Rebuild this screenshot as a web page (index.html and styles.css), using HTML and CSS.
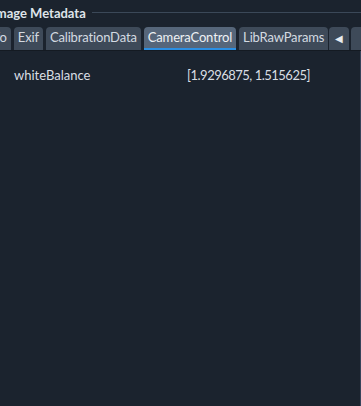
FILE: index.html
```html
<!DOCTYPE html>
<html lang="en">
<head>
  <meta charset="UTF-8">
  <title>Image Metadata</title>
  <link rel="stylesheet" href="styles.css">
</head>

<body>
  <div class="panel">
    <!-- Group title -->
    <div class="group-title">
      <span class="title-text">Image Metadata</span>
      <span class="title-line"></span>
    </div>

    <!-- Tab bar (scrolled) -->
    <div class="tab-bar">
      <div class="tabs">
        <div class="tab first">Info</div>
        <div class="tab">Exif</div>
        <div class="tab">CalibrationData</div>
        <div class="tab active">CameraControl</div>
        <div class="tab">LibRawParams</div>
      </div>
      <div class="scroll-btns">
        <div class="scroll-btn">&#9664;</div>
        <div class="scroll-btn"></div>
      </div>
    </div>

    <!-- Tab page -->
    <div class="page">
      <div class="row">
        <span class="key">whiteBalance</span>
        <span class="value">[1.9296875, 1.515625]</span>
      </div>
    </div>
  </div>
</body>
</html>
```

FILE: styles.css
```css
body {
  margin: 0;
  background: #1b232e;
  font-family: Lato, "Noto Sans", sans-serif;
  font-size: 13px;
  font-variant-ligatures: none;
  color: #d9dee4;
  overflow: hidden;
}

.panel {
  width: 361px;
  height: 406px;
  display: flex;
  flex-direction: column;
  overflow: hidden;
}

.group-title {
  display: flex;
  align-items: center;
  height: 25px;
  margin-left: -8px;
  padding-bottom: 2px;
}

.title-text {
  font-weight: bold;
  white-space: nowrap;
  color: #dfe4ea;
}

.title-line {
  flex: 1;
  height: 1px;
  background: #3b4858;
  margin-left: 6px;
}

.tab-bar {
  display: flex;
  height: 23px;
  border-bottom: 1px solid #141a22;
}

.tabs {
  display: flex;
  gap: 3px;
  margin-left: -19px;
  width: 348px;
  flex: none;
  overflow: hidden;
}

.tab {
  background: #3e4a59;
  border-radius: 4px 4px 0 0;
  padding: 0 4px;
  line-height: 21px;
  white-space: nowrap;
  letter-spacing: -0.15px;
  border-bottom: 2px solid transparent;
  color: #d4dae1;
}

.tab.active {
  background: #56667a;
  border-bottom-color: #2b8fe3;
  color: #eef1f4;
}

.scroll-btns {
  display: flex;
  gap: 2px;
  flex: none;
}

.scroll-btn {
  width: 20px;
  background: #3e4a59;
  border-radius: 4px 4px 0 0;
  font-size: 10px;
  line-height: 22px;
  text-align: center;
  color: #e8ecf0;
}

.page {
  flex: 1;
  border-right: 1px solid #37445a;
  padding: 16px 14px;
}

.row {
  display: flex;
}

.key {
  width: 173px;
}

.value {
  letter-spacing: -0.5px;
}
```
